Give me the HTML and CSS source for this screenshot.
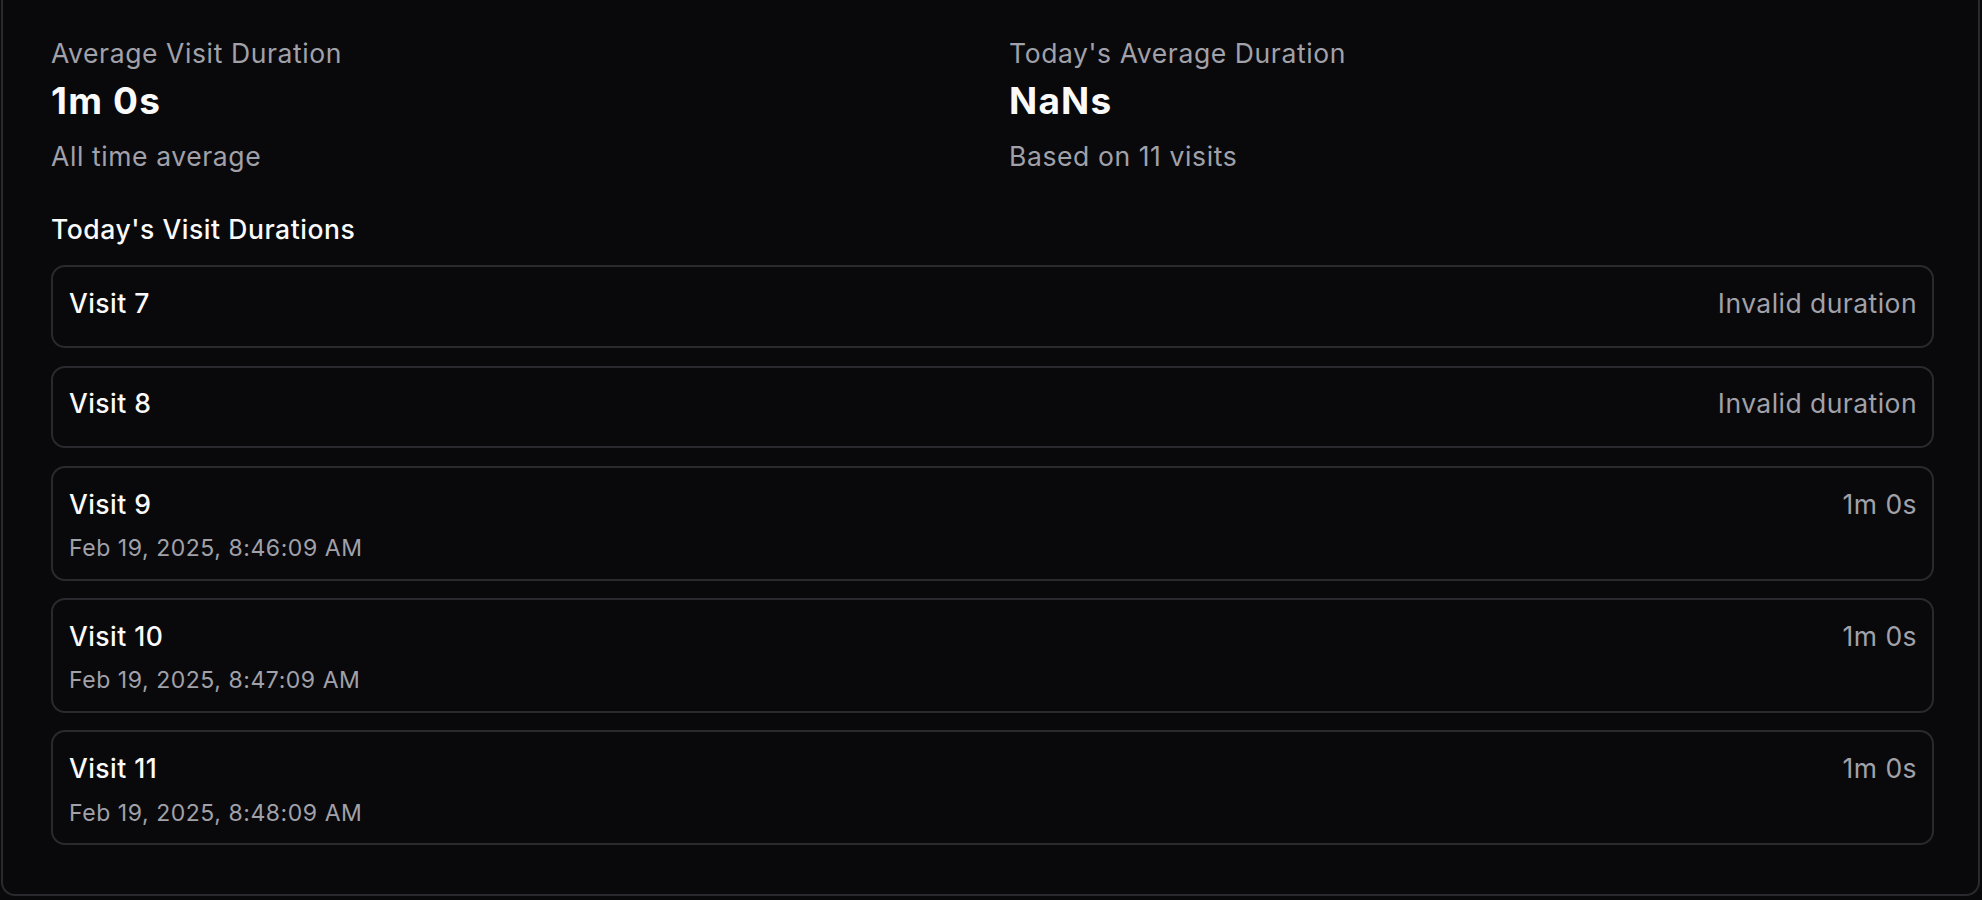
FILE: index.html
```html
<!DOCTYPE html>
<html lang="en">
<head>
<meta charset="utf-8">
<title>Visit Durations</title>
<link rel="stylesheet" href="styles.css">
</head>
<body>
<div class="card">
  <div class="stats">
    <div class="stat">
      <div class="stat-label">Average Visit Duration</div>
      <div class="stat-value">1m 0s</div>
      <div class="stat-sub">All time average</div>
    </div>
    <div class="stat">
      <div class="stat-label">Today's Average Duration</div>
      <div class="stat-value">NaNs</div>
      <div class="stat-sub">Based on 11 visits</div>
    </div>
  </div>
  <div class="section-title">Today's Visit Durations</div>
  <div class="visits">
    <div class="visit">
      <div class="visit-row"><span class="visit-name">Visit 7</span><span class="visit-dur">Invalid duration</span></div>
    </div>
    <div class="visit">
      <div class="visit-row"><span class="visit-name">Visit 8</span><span class="visit-dur">Invalid duration</span></div>
    </div>
    <div class="visit">
      <div class="visit-row"><span class="visit-name">Visit 9</span><span class="visit-dur">1m 0s</span></div>
      <div class="visit-date">Feb 19, 2025, 8:46:09 AM</div>
    </div>
    <div class="visit">
      <div class="visit-row"><span class="visit-name">Visit 10</span><span class="visit-dur">1m 0s</span></div>
      <div class="visit-date">Feb 19, 2025, 8:47:09 AM</div>
    </div>
    <div class="visit">
      <div class="visit-row"><span class="visit-name">Visit 11</span><span class="visit-dur">1m 0s</span></div>
      <div class="visit-date">Feb 19, 2025, 8:48:09 AM</div>
    </div>
  </div>
</div>
</body>
</html>
```
FILE: styles.css
```css
html, body {
  margin: 0;
  padding: 0;
  background: #09090b;
}
body {
  font-family: Inter, "Noto Sans", "Liberation Sans", sans-serif;
  color: #fafafa;
  height: 900px;
  overflow: hidden;
}
.card {
  margin: 0 2px 0 1px;
  background: #09090b;
  border: 2px solid #2a2a2e;
  border-top: none;
  border-radius: 0 0 14px 14px;
  padding: 33px 44px 49px 48px;
}
.stats {
  display: grid;
  grid-template-columns: 1fr 1fr;
  column-gap: 33px;
}
.stat-label {
  font-size: 26.5px;
  line-height: 40px;
  letter-spacing: 0.6px;
  color: #a1a1aa;
}
.stat-value {
  font-size: 37px;
  line-height: 48px;
  font-weight: 700;
  letter-spacing: 1.2px;
  margin-top: 4.4px;
  color: #fafafa;
}
.stat-sub {
  font-size: 26.5px;
  line-height: 40px;
  letter-spacing: 0.6px;
  color: #a1a1aa;
  margin-top: 11px;
}
.section-title {
  font-size: 26.5px;
  line-height: 40px;
  font-weight: 500;
  letter-spacing: 0.55px;
  margin-top: 32.3px;
  color: #fafafa;
}
.visits {
  display: flex;
  flex-direction: column;
  gap: 17.6px;
  margin-top: 16.6px;
}
.visit {
  border: 2px solid #2a2a2e;
  border-radius: 14px;
  padding: 15.7px 15px 14.5px 16px;
}
.visit-row {
  display: flex;
  justify-content: space-between;
  align-items: baseline;
  font-size: 26.5px;
  line-height: 40px;
  letter-spacing: 0.45px;
  margin-bottom: 8.5px;
}
.visit-name {
  font-weight: 500;
  color: #fafafa;
}
.visit-dur {
  color: #a1a1aa;
}
.visit-date {
  font-size: 23px;
  line-height: 32px;
  letter-spacing: 0.55px;
  color: #a1a1aa;
}
```
